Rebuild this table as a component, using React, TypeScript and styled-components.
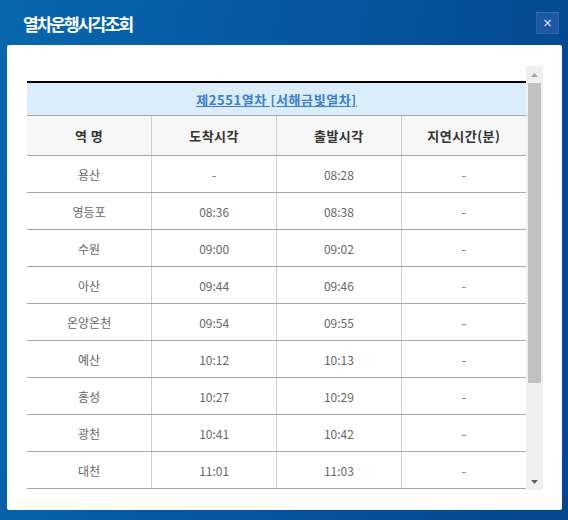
import React from "react";
import styled, { createGlobalStyle } from "styled-components";

const Global = createGlobalStyle`
  html, body { margin: 0; padding: 0; }
  body {
    width: 568px;
    height: 520px;
    overflow: hidden;
    font-family: "Noto Sans CJK KR", "Noto Sans", sans-serif;
  }
`;

const Window = styled.div`
  width: 568px;
  height: 520px;
  box-sizing: border-box;
  background: linear-gradient(100deg, #0767ad 0%, #0657a0 45%, #05468f 100%);
  display: flex;
  flex-direction: column;
  padding: 0 6px 10px 7px;
`;

const TitleBar = styled.div`
  height: 45px;
  box-sizing: border-box;
  flex: none;
  display: flex;
  align-items: center;
  justify-content: space-between;
  padding: 1px 3px 0 16px;
`;

const Title = styled.h1`
  margin: 0;
  color: #fff;
  font-size: 17px;
  font-weight: 700;
  letter-spacing: -2px;
  line-height: 1;
`;

const CloseButton = styled.button`
  width: 23px;
  height: 22px;
  padding: 0 0 1px;
  border: 1px solid #2a62ab;
  border-top-color: #3a71b6;
  background: #1b57a2;
  color: #e8eef8;
  font-family: "DejaVu Sans", sans-serif;
  font-size: 12px;
  line-height: 1;
  display: flex;
  align-items: center;
  justify-content: center;
`;

const Panel = styled.div`
  flex: 1;
  background: #fff;
  border-radius: 2px;
  padding: 21px 19px 20px 20px;
  display: flex;
`;

const ScrollArea = styled.div`
  flex: 1;
  height: 424px;
  display: flex;
  overflow: hidden;
`;

const Content = styled.div`
  width: 499px;
  flex: none;
  padding-top: 15px;
`;

const ScrollTrack = styled.div`
  width: 17px;
  flex: none;
  background: #f0f0f0;
  display: flex;
  flex-direction: column;
`;

const ArrowButton = styled.div`
  height: 17px;
  flex: none;
  display: flex;
  align-items: center;
  justify-content: center;
`;

const ThumbArea = styled.div`
  flex: 1;
  padding: 0 2px;
`;

const Thumb = styled.div`
  height: 300px;
  background: #c1c1c1;
`;

const Table = styled.table`
  width: 499px;
  border-collapse: collapse;
  table-layout: fixed;
  border-top: 2px solid #000;
`;

const Caption = styled.th`
  height: 32px;
  background: #dbedfa;
  border-bottom: 1px solid #a8a8a8;
  padding: 0;
  font-size: 13px;
  font-weight: 700;
  text-align: center;
`;

const CaptionLink = styled.a`
  color: #3b7fc4;
  text-decoration: underline;
  letter-spacing: 0.6px;
`;

const HeadCell = styled.th`
  height: 39px;
  background: #f6f6f6;
  border-bottom: 1px solid #a8a8a8;
  border-left: 1px solid #cfcfcf;
  padding: 0;
  font-size: 13px;
  font-weight: 700;
  color: #333;
  text-align: center;
  letter-spacing: 0.5px;
  &:first-child { border-left: 0; }
`;

const Cell = styled.td`
  height: 36px;
  border-bottom: 1px solid #a8a8a8;
  border-left: 1px solid #cfcfcf;
  padding: 0;
  font-size: 12px;
  color: #666;
  text-align: center;
  &:first-child { border-left: 0; }
`;

const rows: [string, string, string, string][] = [
  ["용산", "-", "08:28", "-"],
  ["영등포", "08:36", "08:38", "-"],
  ["수원", "09:00", "09:02", "-"],
  ["아산", "09:44", "09:46", "-"],
  ["온양온천", "09:54", "09:55", "-"],
  ["예산", "10:12", "10:13", "-"],
  ["홍성", "10:27", "10:29", "-"],
  ["광천", "10:41", "10:42", "-"],
  ["대천", "11:01", "11:03", "-"],
];

const Arrow = ({ up }: { up?: boolean }) => (
  <svg width="7" height="4" viewBox="0 0 7 4">
    <polygon
      points={up ? "0,4 7,4 3.5,0" : "0,0 7,0 3.5,4"}
      fill={up ? "#a3a3a3" : "#606060"}
    />
  </svg>
);

export default function App() {
  return (
    <>
      <Global />
      <Window>
        <TitleBar>
          <Title>열차운행시각조회</Title>
          <CloseButton aria-label="닫기">×</CloseButton>
        </TitleBar>
        <Panel>
          <ScrollArea>
            <Content>
              <Table>
                <thead>
                  <tr>
                    <Caption colSpan={4}>
                      <CaptionLink href="#">제2551열차 [서해금빛열차]</CaptionLink>
                    </Caption>
                  </tr>
                  <tr>
                    <HeadCell>역 명</HeadCell>
                    <HeadCell>도착시각</HeadCell>
                    <HeadCell>출발시각</HeadCell>
                    <HeadCell>지연시간(분)</HeadCell>
                  </tr>
                </thead>
                <tbody>
                  {rows.map((r) => (
                    <tr key={r[0]}>
                      {r.map((v, i) => (
                        <Cell key={i}>{v}</Cell>
                      ))}
                    </tr>
                  ))}
                </tbody>
              </Table>
            </Content>
            <ScrollTrack>
              <ArrowButton>
                <Arrow up />
              </ArrowButton>
              <ThumbArea>
                <Thumb />
              </ThumbArea>
              <ArrowButton>
                <Arrow />
              </ArrowButton>
            </ScrollTrack>
          </ScrollArea>
        </Panel>
      </Window>
    </>
  );
}
